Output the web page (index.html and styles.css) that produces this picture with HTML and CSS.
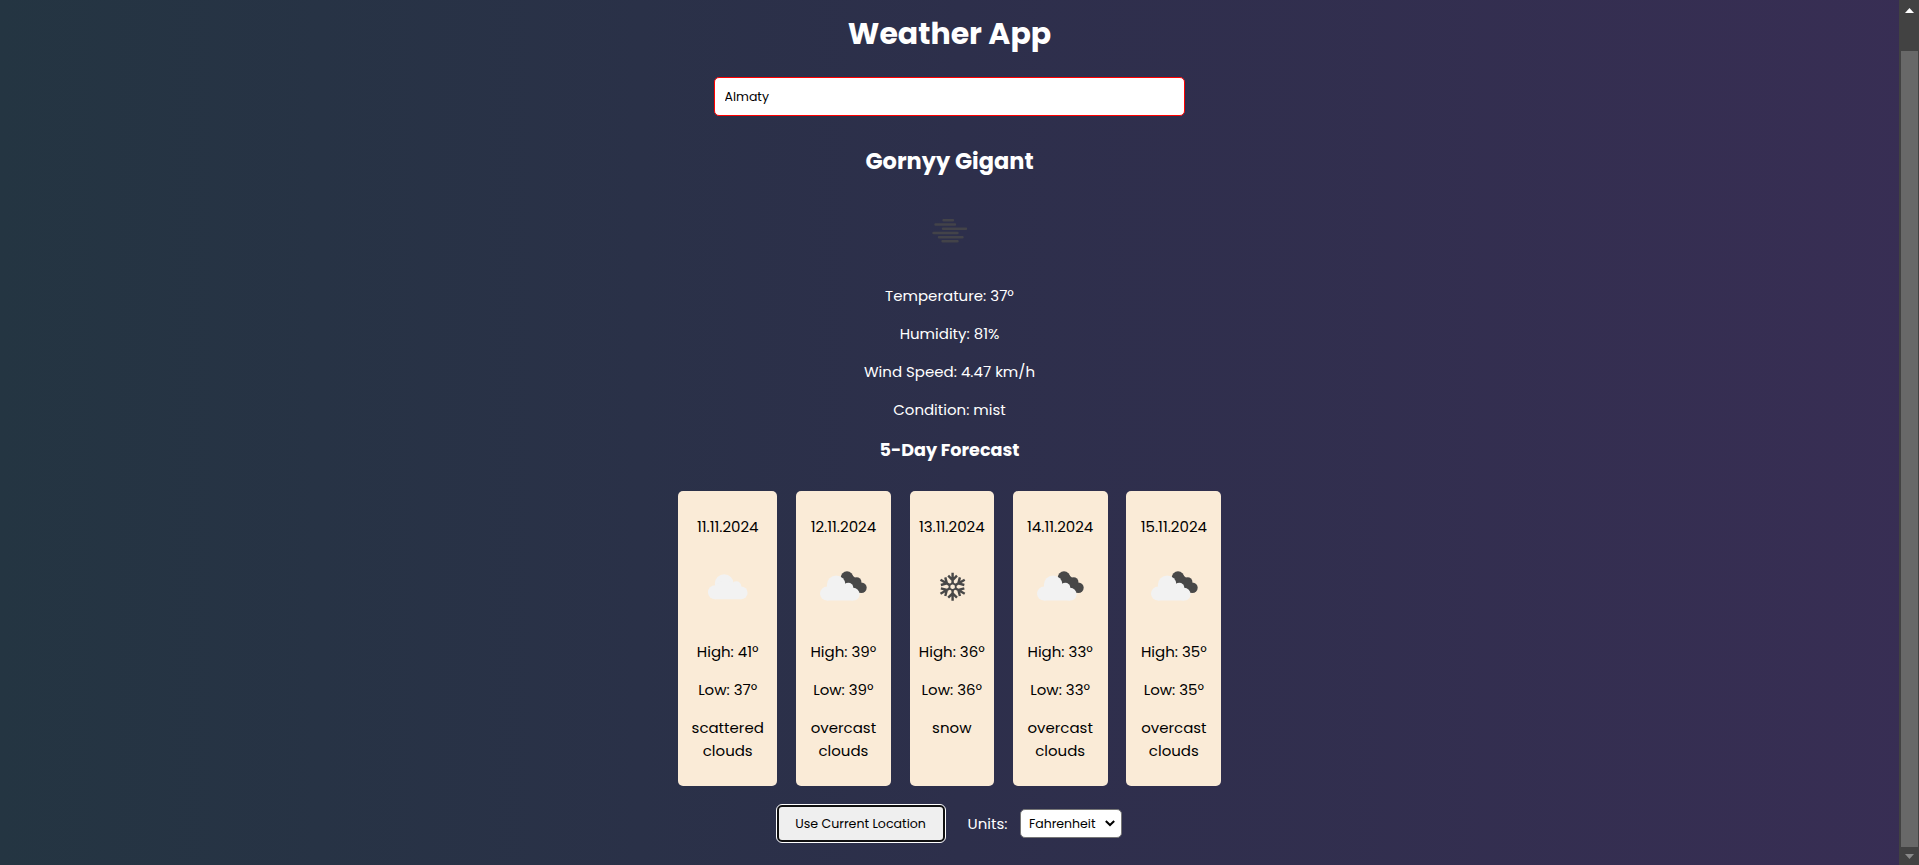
FILE: index.html
```
<!DOCTYPE html>
<html lang="en">
<head>
<meta charset="utf-8">
<title>Weather App</title>
<link rel="stylesheet" href="styles.css">
</head>
<body>
<svg class="defs" aria-hidden="true">
  <defs>
    <g id="cloud">
      <circle cx="7" cy="18.2" r="7"/><circle cx="16.2" cy="9.6" r="9.4"/><circle cx="28.3" cy="12.3" r="5"/><circle cx="33.2" cy="18.8" r="6.4"/><path d="M7 12L16 5L28 10L33 15V25.2H7Z"/>
    </g>
    <g id="overcast">
      <g fill="#484848"><circle cx="54" cy="40.6" r="6.3"/><circle cx="63.6" cy="45" r="4.8"/><circle cx="68.4" cy="50.8" r="5.3"/><path d="M50 44L59 38L68 46L67 56L60 54Z"/></g>
      <use href="#cloud" x="27" y="38.4" fill="#f2f2f2"/>
    </g>
    <g id="arm"><path d="M0 -2.6V-14M0 -6.6L-4.4 -11M0 -6.6L4.4 -11"/></g>
  </defs>
</svg>
<div class="page">
  <main class="app">
    <h1 class="title">Weather App</h1>
    <input class="search" type="text" value="Almaty">
    <section class="current">
      <h2 class="place">Gornyy Gigant</h2>
      <svg class="icon mist" viewBox="0 0 100 105">
        <path d="M43.5 41.3H53M35.5 45.5H55M43 49.8H66M33.5 54H57.5M39 58.2H62.5M42.5 62.2H57.5"/>
      </svg>
      <p class="stat">Temperature: 37º</p>
      <p class="stat">Humidity: 81%</p>
      <p class="stat">Wind Speed: 4.47 km/h</p>
      <p class="stat">Condition: mist</p>
    </section>
    <h3 class="subtitle">5-Day Forecast</h3>
    <section class="forecast">
      <article class="card">
        <p>11.11.2024</p>
        <svg class="icon" viewBox="0 1 100 102"><use href="#cloud" x="30" y="37" fill="#f2f2f2"/></svg>
        <p class="stat">High: 41º</p><p class="stat">Low: 37º</p><p>scattered<br>clouds</p>
      </article>
      <article class="card">
        <p>12.11.2024</p>
        <svg class="icon" viewBox="0 1 100 102"><use href="#overcast"/></svg>
        <p class="stat">High: 39º</p><p class="stat">Low: 39º</p><p>overcast<br>clouds</p>
      </article>
      <article class="card">
        <p>13.11.2024</p>
        <svg class="icon" viewBox="0 0 100 102">
          <g transform="translate(50.6 48.7)" fill="none" stroke="#484848" stroke-width="2.4">
            <use href="#arm"/><use href="#arm" transform="rotate(60)"/><use href="#arm" transform="rotate(120)"/><use href="#arm" transform="rotate(180)"/><use href="#arm" transform="rotate(240)"/><use href="#arm" transform="rotate(300)"/>
            <path d="M0 -3.6L3.1 -1.8V1.8L0 3.6L-3.1 1.8V-1.8Z" stroke-width="1.8"/>
          </g>
        </svg>
        <p class="stat">High: 36º</p><p class="stat">Low: 36º</p><p>snow</p>
      </article>
      <article class="card">
        <p>14.11.2024</p>
        <svg class="icon" viewBox="0 1 100 102"><use href="#overcast"/></svg>
        <p class="stat">High: 33º</p><p class="stat">Low: 33º</p><p>overcast<br>clouds</p>
      </article>
      <article class="card">
        <p>15.11.2024</p>
        <svg class="icon" viewBox="0 1 100 102"><use href="#overcast"/></svg>
        <p class="stat">High: 35º</p><p class="stat">Low: 35º</p><p>overcast<br>clouds</p>
      </article>
    </section>
    <div class="controls">
      <button class="locate" type="button">Use Current Location</button>
      <span class="units">Units:</span>
      <div class="select"><span>Fahrenheit</span><svg width="10" height="7" viewBox="0 0 10 7" fill="none" stroke="#000" stroke-width="2"><path d="M.8 1L5 5L9.2 1"/></svg></div>
    </div>
  </main>
  <aside class="scrollbar">
    <svg class="arrow" viewBox="0 0 9 5" fill="#fff"><path d="M4.5 0L9 5H0Z"/></svg>
    <div class="thumb"></div>
    <svg class="arrow" viewBox="0 0 9 5" fill="#8a8a8a"><path d="M0 0H9L4.5 5Z"/></svg>
  </aside>
</div>
</body>
</html>
```
FILE: styles.css
```
* { box-sizing: border-box; margin: 0; }
body { font: 15px/23px Poppins, Inter, sans-serif; color: #fff; overflow: hidden; }
.defs { display: block; width: 0; height: 0; }
.page { display: flex; width: 100%; height: 865px; background: linear-gradient(to right, #243542 0%, #2d2f4b 50%, #382e54 100%); }
.app { flex: 1; display: flex; flex-direction: column; align-items: center; padding-top: 11px; text-align: center; }
.title { font-size: 30px; line-height: 45px; font-weight: 700; }
.search { width: 471px; height: 39px; margin-top: 21px; padding: 0 9.5px; border: 1px solid #f00; border-radius: 5px; background: #fff; color: #000; font: 400 12.5px Poppins, Inter, sans-serif; outline: none; }
.current { display: flex; flex-direction: column; align-items: center; margin-top: 27px; }
.place { font-size: 22.5px; line-height: 36px; font-weight: 700; }
.icon { display: block; width: 100px; flex: none; }
.mist { fill: none; stroke: #434349; stroke-width: 2.4; stroke-linecap: round; }
.stat { margin-bottom: 15px; }
.subtitle { font-size: 17.6px; line-height: 28px; font-weight: 700; }
.forecast { display: grid; grid-template-columns: 99px 95px 84.4px 95px 95px; gap: 18.7px; height: 295px; margin: 27px 0 0 0.6px; }
.card { display: flex; flex-direction: column; align-items: center; padding-top: 24px; border-radius: 5px; background: #faebd7; color: #000; }
.card p { white-space: nowrap; }
.controls { display: flex; align-items: center; height: 41px; margin-top: 17px; }
.locate { width: 168px; height: 37px; border: 2px solid #101010; border-radius: 5px; outline: 1.5px solid #fff; background: #efefef; color: #000; padding: 0; font: 400 12.6px Poppins, Inter, sans-serif; white-space: nowrap; }
.units { margin-left: 23px; }
.select { display: flex; align-items: center; justify-content: space-between; width: 102px; height: 29px; margin-left: 13px; padding: 0 6px 0 7.5px; border: 1px solid #767676; border-radius: 5px; background: #fff; color: #000; font-size: 12.5px; }
.scrollbar { display: flex; flex-direction: column; align-items: center; width: 20px; padding: 8px 1px 0 2px; background: #424242; }
.arrow { display: block; width: 9px; height: 5px; flex: none; }
.thumb { width: 17px; height: 796px; margin: 38px 0 7px; background: #686868; flex: none; }
```
